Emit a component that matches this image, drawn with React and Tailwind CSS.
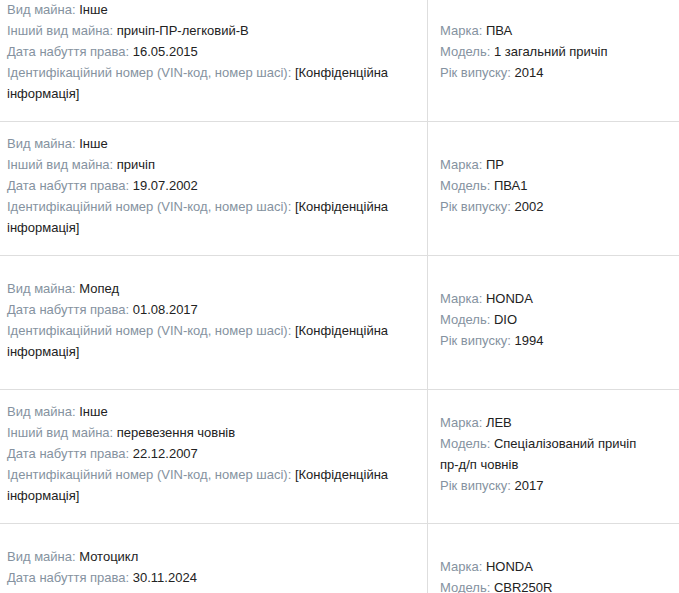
import React from 'react';

const ROWS = [
    {
        left: [
            ['Вид майна', 'Інше'],
            ['Інший вид майна', 'причіп-ПР-легковий-В'],
            ['Дата набуття права', '16.05.2015'],
            ['Ідентифікаційний номер (VIN-код, номер шасі)', '[Конфіденційна інформація]']
        ],
        right: [['Марка', 'ПВА'], ['Модель', '1 загальний причіп'], ['Рік випуску', '2014']]
    },
    {
        left: [
            ['Вид майна', 'Інше'],
            ['Інший вид майна', 'причіп'],
            ['Дата набуття права', '19.07.2002'],
            ['Ідентифікаційний номер (VIN-код, номер шасі)', '[Конфіденційна інформація]']
        ],
        right: [['Марка', 'ПР'], ['Модель', 'ПВА1'], ['Рік випуску', '2002']]
    },
    {
        left: [
            ['Вид майна', 'Мопед'],
            ['Дата набуття права', '01.08.2017'],
            ['Ідентифікаційний номер (VIN-код, номер шасі)', '[Конфіденційна інформація]']
        ],
        right: [['Марка', 'HONDA'], ['Модель', 'DIO'], ['Рік випуску', '1994']]
    },
    {
        left: [
            ['Вид майна', 'Інше'],
            ['Інший вид майна', 'перевезення човнів'],
            ['Дата набуття права', '22.12.2007'],
            ['Ідентифікаційний номер (VIN-код, номер шасі)', '[Конфіденційна інформація]']
        ],
        right: [['Марка', 'ЛЕВ'], ['Модель', 'Спеціалізований причіп пр-д/п човнів'], ['Рік випуску', '2017']]
    },
    {
        left: [
            ['Вид майна', 'Мотоцикл'],
            ['Дата набуття права', '30.11.2024'],
            ['Ідентифікаційний номер (VIN-код, номер шасі)', '[Конфіденційна інформація]']
        ],
        right: [['Марка', 'HONDA'], ['Модель', 'CBR250R'], ['Рік випуску', '2011']]
    }
];

function Field({ label, value }) {
    return (
        <div>
            <span className="text-[#8592a0]">{label}: </span>
            <span className="text-[#222222]">{value}</span>
        </div>
    );
}

export default function App() {
    return (
        <div className="h-[593px] overflow-hidden bg-white font-['Liberation_Sans',Arial,sans-serif] text-[13px] leading-[21px]">
            <div className="-mt-[12px]">
                {ROWS.map((row, i) => (
                    <div key={i} className="flex h-[134px] border-b border-[#dedede]">
                        <div className="w-[428px] shrink-0 flex flex-col justify-center border-r border-[#dedede] pl-[7px] pr-[8px] pb-[6px]">
                            {row.left.map(([l, v]) => <Field key={l} label={l} value={v} />)}
                        </div>
                        <div className="flex-1 flex flex-col justify-center pl-[12px] pr-[30px] pb-[6px]">
                            {row.right.map(([l, v]) => <Field key={l} label={l} value={v} />)}
                        </div>
                    </div>
                ))}
            </div>
        </div>
    );
}
